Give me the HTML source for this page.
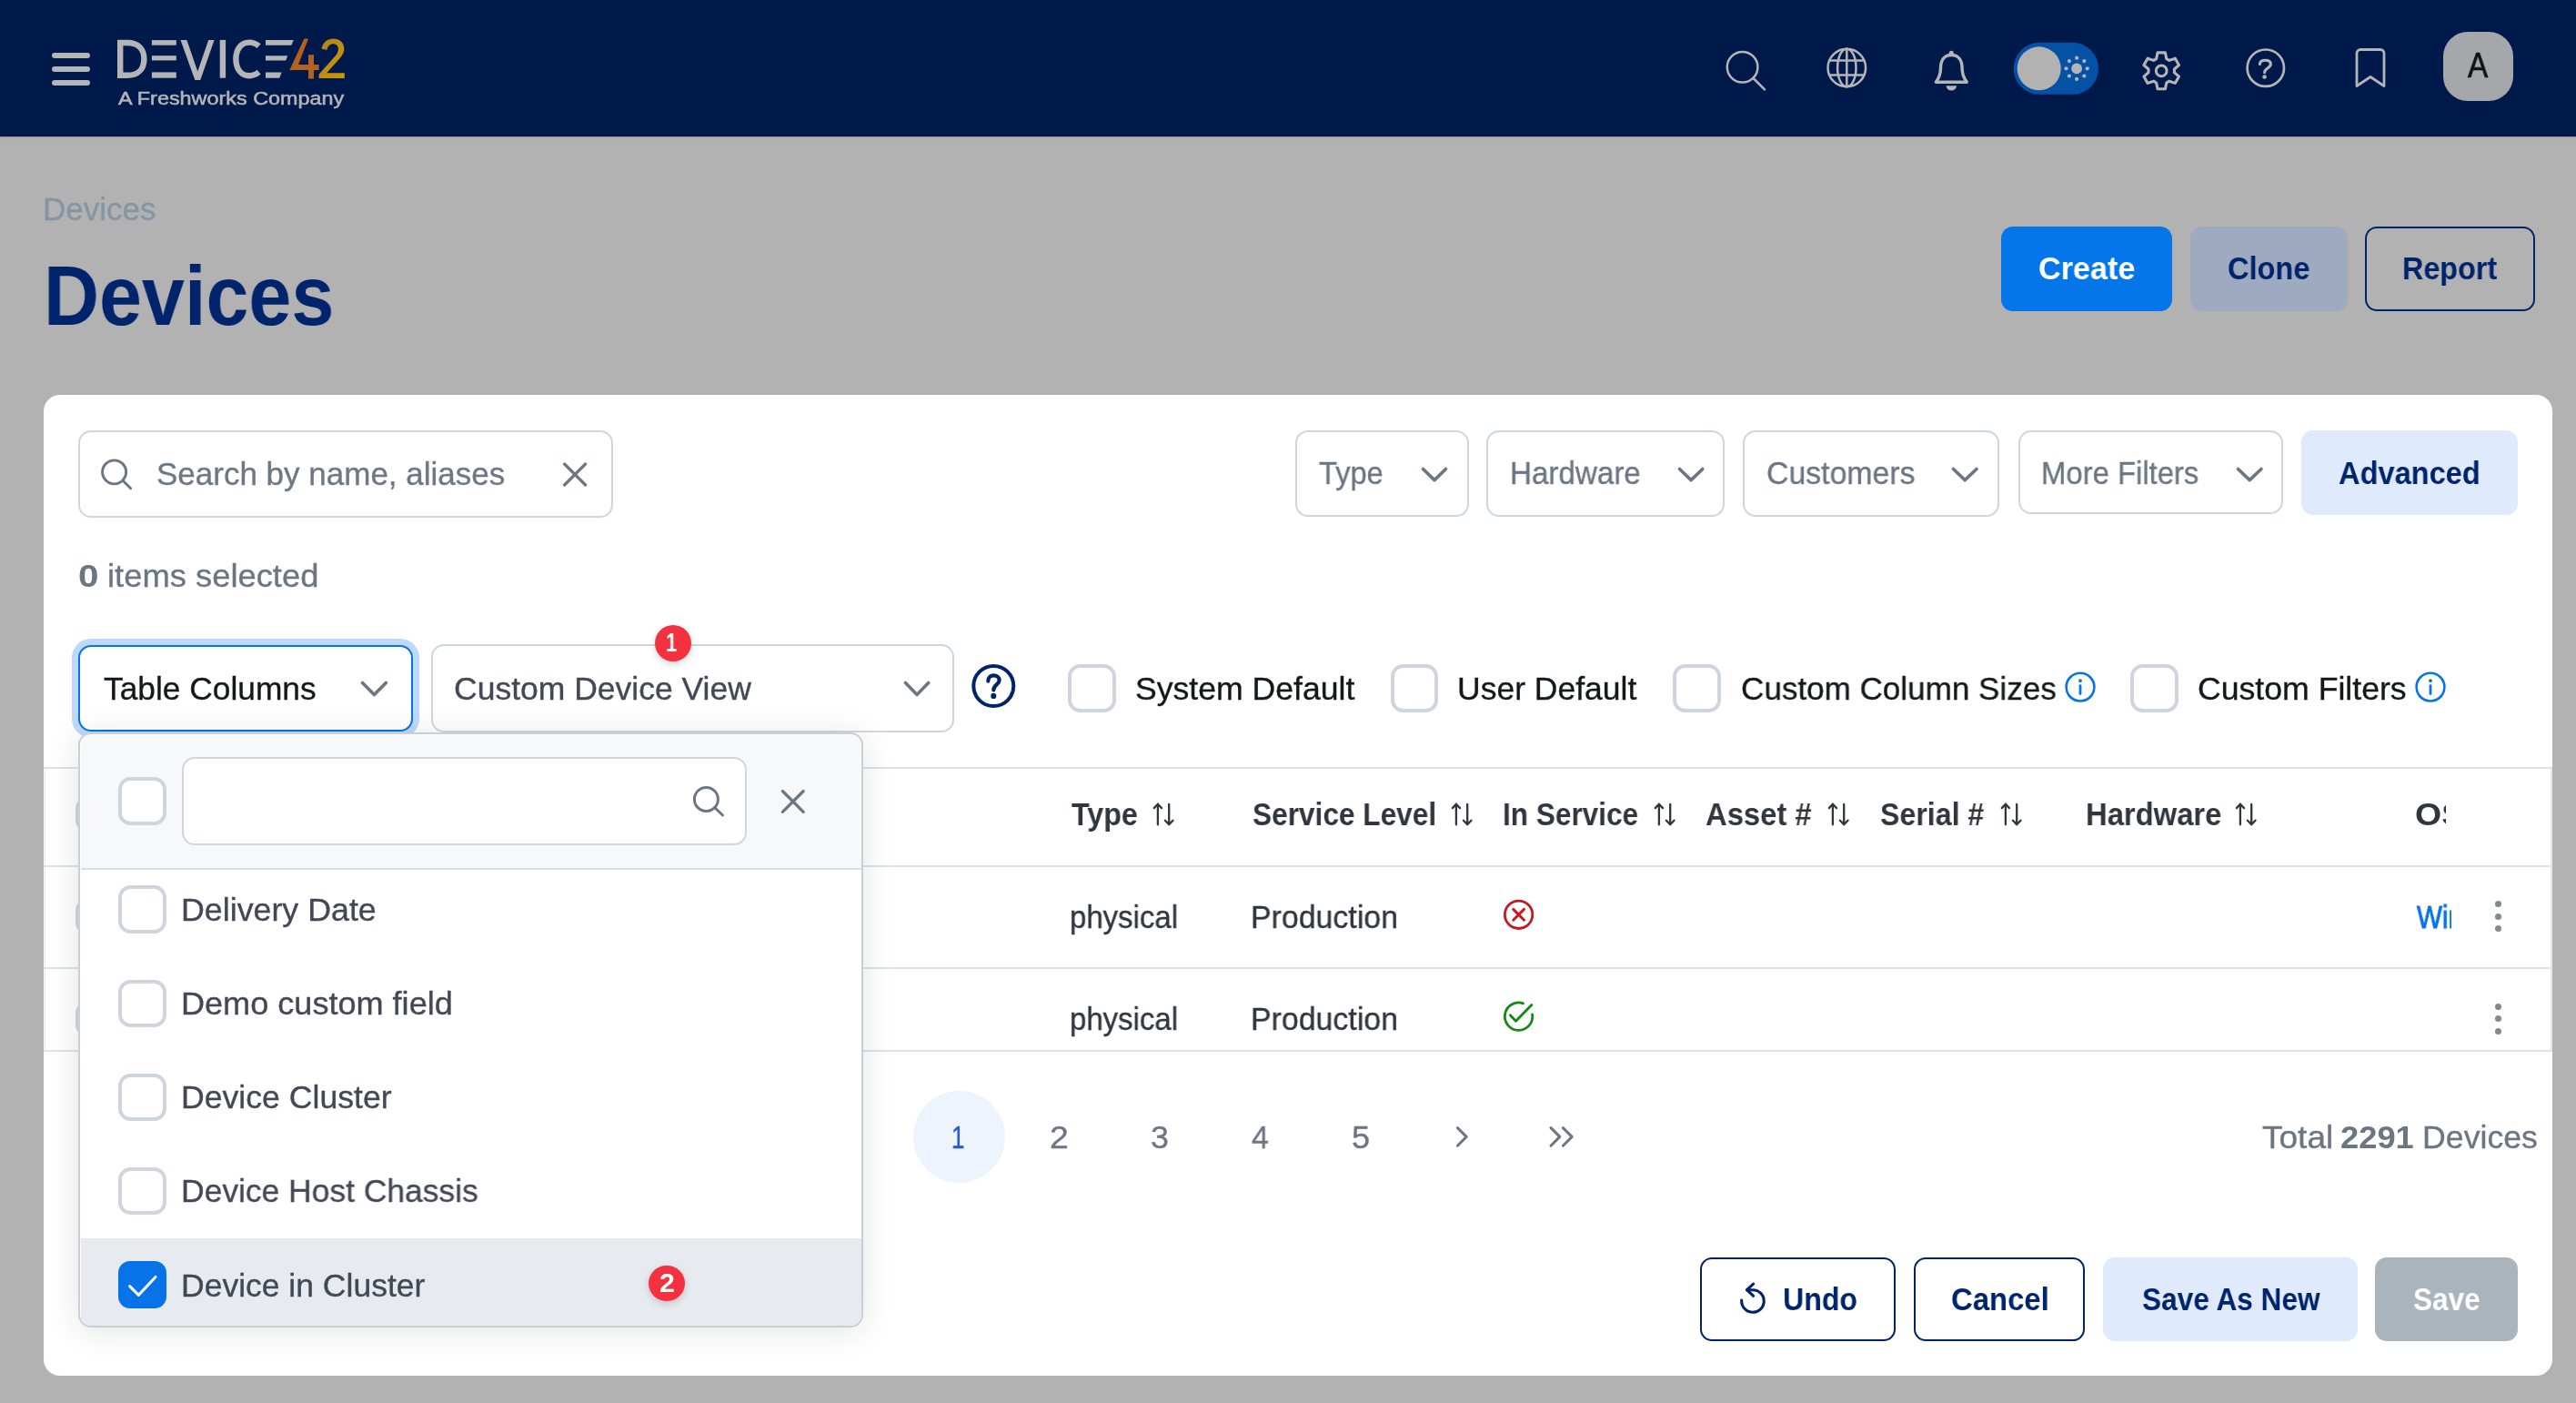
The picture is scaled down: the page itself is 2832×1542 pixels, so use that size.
<!DOCTYPE html>
<html lang="en"><head><meta charset="utf-8"><title>Devices - Device42</title>
<style>
html,body{margin:0;padding:0;}
body{width:2832px;height:1542px;overflow:hidden;background:#b2b2b2;font-family:"Liberation Sans",sans-serif;position:relative;}
.b{position:absolute;box-sizing:border-box;display:block;}
.t{position:absolute;white-space:pre;transform-origin:0 50%;display:block;will-change:transform;}

.hdr{background:#00194b;border-bottom:1px solid #001241;box-shadow:0 1px 2px rgba(0,0,30,.16);}
.card{background:#fff;border-radius:18px;}
.inp{background:#fff;border:2px solid #cfd6de;border-radius:14px;}
.cb{background:#fff;border:4px solid #cfd5dd;border-radius:13.5px;}
.btn{border-radius:13px;}
.ln{background:#dde2e8;}

</style></head><body>
<div class="b hdr" style="left:0px;top:0px;width:2832px;height:150px;"></div>
<div class="b " style="left:57px;top:58px;width:42px;height:6px;background:#b4b5b7;border-radius:3px;"></div>
<div class="b " style="left:57px;top:73px;width:42px;height:6px;background:#b4b5b7;border-radius:3px;"></div>
<div class="b " style="left:57px;top:88px;width:42px;height:6px;background:#b4b5b7;border-radius:3px;"></div>
<svg class="b" style="left:125px;top:36px;" width="260" height="60" viewBox="0 0 260 60">
<g fill="none" stroke="#b4b5b7" stroke-width="6.4">
<path d="M7.2 11 V46.8 H15 C27 46.8 33.4 39.5 33.4 28.9 C33.4 18.3 27 11 15 11 Z"/>
<path d="M119.9 7.9 V49.7"/>
<path d="M159.6 14.6 C156.5 11.9 152.8 10.6 149 10.6 C140 10.6 134.4 18 134.4 28.9 C134.4 39.8 140 47.2 149 47.2 C152.8 47.2 156.5 45.9 159.6 43.2"/>
</g>
<g fill="#b4b5b7">
<path d="M73.5 7.9 H80.4 L92.3 42.4 L104.2 7.9 H110.6 L95.3 51.9 H89.3 Z"/>
<rect x="41.9" y="8.1" width="26.9" height="5.6"/><rect x="41.9" y="25.2" width="26.9" height="5.2"/><rect x="41.9" y="43.4" width="26.9" height="6.3"/>
<path d="M167 8.1 H197.8 L195.3 13.7 H167 Z"/><path d="M167 25.2 H191.3 L189.2 30.4 H167 Z"/><path d="M167 43.4 H184.7 L182.2 49.7 H167 Z"/>
</g>
<path d="M209.4 6.6 L214 6.6 L203 35 L225.6 35 L225.6 40.9 L193.3 40.9 Z" fill="#b4601f"/>
<rect x="214" y="24.2" width="6" height="26.3" fill="#b4601f"/>
<defs><linearGradient id="g2" x1="0" y1="0" x2="1" y2="1"><stop offset="0" stop-color="#b6801a"/><stop offset="1" stop-color="#c9990a"/></linearGradient></defs>
<path d="M228.5 17.5 C230 10.5 235 6.6 241.5 6.6 C248.6 6.6 253.3 11.2 253.3 17.6 C253.3 22.2 251 25.6 246.5 30.5 L234 44.2 H253.8 V50 H225.6 V45.8 L241.8 27.6 C245.4 23.6 246.9 21 246.9 17.9 C246.9 14.6 244.8 12.3 241.3 12.3 C237.7 12.3 235.4 14.6 234.4 18.9 Z" fill="url(#g2)"/>
</svg>
<span class="t " style="left:130.00px;top:95.50px;font-size:20.5px;line-height:23px;color:#b4b5b7;transform:scaleX(1.1410);-webkit-text-stroke:0.35px #b4b5b7;-webkit-text-stroke:0.55px #b4b5b7;">A Freshworks Company</span>
<svg class="b" style="left:0px;top:0px;" width="2832" height="150" viewBox="0 0 2832 150"><g fill="none" stroke="#b4b5b7" stroke-width="2.5" stroke-linecap="round" stroke-linejoin="round"><circle cx="1915.6" cy="73.7" r="16.8"/><path d="M1927.6 86 L1940 98.3"/><circle cx="2030.3" cy="74.5" r="20.8"/><ellipse cx="2030.3" cy="74.5" rx="10.2" ry="20.8"/><path d="M2030.3 53.7V95.3M2011.5 66.4H2049.1M2011.5 82.6H2049.1"/></g><g fill="none" stroke="#b4b5b7" stroke-width="3.4" stroke-linejoin="round" stroke-linecap="round"><path d="M2145.3 60.5 C2136.5 60.5 2133.5 67.5 2133.5 75 C2133.5 82 2131.5 86 2128.3 90.2 H2162.3 C2159.1 86 2157.1 82 2157.1 75 C2157.1 67.5 2154.1 60.5 2145.3 60.5 Z"/></g><circle cx="2145.3" cy="58.4" r="2.6" fill="#b4b5b7"/><path d="M2139.6 94.3 H2151 A5.7 5.2 0 0 1 2139.6 94.3 Z" fill="#b4b5b7"/><rect x="2213.7" y="46.8" width="93.3" height="57" rx="28.5" fill="#0451a5"/><circle cx="2241.7" cy="75.3" r="24" fill="#b2b2b2"/><circle cx="2283.1" cy="75.3" r="5.9" fill="#b4b5b7"/><circle cx="2294.7" cy="75.3" r="2.1" fill="#b4b5b7"/><circle cx="2291.3" cy="83.5" r="2.1" fill="#b4b5b7"/><circle cx="2283.1" cy="86.9" r="2.1" fill="#b4b5b7"/><circle cx="2274.9" cy="83.5" r="2.1" fill="#b4b5b7"/><circle cx="2271.5" cy="75.3" r="2.1" fill="#b4b5b7"/><circle cx="2274.9" cy="67.1" r="2.1" fill="#b4b5b7"/><circle cx="2283.1" cy="63.7" r="2.1" fill="#b4b5b7"/><circle cx="2291.3" cy="67.1" r="2.1" fill="#b4b5b7"/><path d="M2370.6 64.6 L2372.0 57.9 L2380.4 57.9 L2381.8 64.6 L2384.8 66.4 L2391.3 64.2 L2395.5 71.5 L2390.4 76.0 L2390.4 79.6 L2395.5 84.1 L2391.3 91.4 L2384.8 89.2 L2381.8 91.0 L2380.4 97.7 L2372.0 97.7 L2370.6 91.0 L2367.6 89.2 L2361.1 91.4 L2356.9 84.1 L2362.0 79.6 L2362.0 76.0 L2356.9 71.5 L2361.1 64.2 L2367.6 66.4 Z" fill="none" stroke="#b4b5b7" stroke-width="3.1" stroke-linejoin="round"/><circle cx="2376.2" cy="77.8" r="5.9" fill="none" stroke="#b4b5b7" stroke-width="3"/><circle cx="2490.8" cy="74.7" r="20.2" fill="none" stroke="#b4b5b7" stroke-width="2.7"/><path d="M2484.4 70.6 C2484.4 67.6 2486.8 66.2 2490.4 66.2 C2494 66.2 2496.4 67.9 2496.4 70.6 C2496.4 75 2489.6 74.6 2489.6 79.8" fill="none" stroke="#b4b5b7" stroke-width="3" stroke-linecap="round"/><circle cx="2489.6" cy="84.5" r="2.3" fill="#b4b5b7"/><path d="M2591 94.5 V58.5 A4 4 0 0 1 2595 54.5 H2617 A4 4 0 0 1 2621 58.5 V94.5 L2606 84.5 Z" fill="none" stroke="#b4b5b7" stroke-width="2.8" stroke-linejoin="round"/></svg>
<div class="b " style="left:2686px;top:35px;width:77px;height:76px;background:#a6a7ab;border-radius:27px;"></div>
<span class="t " style="left:2713.20px;top:51.00px;font-size:38px;line-height:42px;color:#111;transform:scaleX(0.8746);-webkit-text-stroke:0.35px #111;-webkit-text-stroke:0.7px #111;">A</span>
<span class="t " style="left:46.60px;top:210.80px;font-size:34.8px;line-height:38px;color:#8595a4;transform:scaleX(1.0066);-webkit-text-stroke:0.35px #8595a4;">Devices</span>
<span class="t " style="left:47.51px;top:272.90px;font-size:92.4px;line-height:104px;color:#00246b;font-weight:700;transform:scaleX(0.9140);">Devices</span>
<div class="b btn" style="left:2200px;top:249px;width:188px;height:93px;background:#0576ea;"></div>
<span class="t " style="left:2240.73px;top:275.50px;font-size:34.5px;line-height:38px;color:#fff;font-weight:700;transform:scaleX(0.9907);">Create</span>
<div class="b btn" style="left:2407.5px;top:249px;width:173.0px;height:93px;background:#9eaabf;"></div>
<span class="t " style="left:2449.00px;top:275.50px;font-size:34.5px;line-height:38px;color:#00246b;font-weight:700;transform:scaleX(0.9430);">Clone</span>
<div class="b btn" style="left:2600px;top:249px;width:187px;height:93px;border:2.4px solid #00246b;"></div>
<span class="t " style="left:2641.30px;top:275.50px;font-size:34.5px;line-height:38px;color:#00246b;font-weight:700;transform:scaleX(0.9367);">Report</span>
<div class="b card" style="left:48px;top:434px;width:2758px;height:1078px;"></div>
<div class="b inp" style="left:86px;top:473px;width:588px;height:96px;"></div>
<svg class="b" style="left:100px;top:495px;" width="60" height="50" viewBox="0 0 60 50"><g fill="none" stroke="#6b7682" stroke-width="2.95" stroke-linecap="round"><circle cx="25.6" cy="23.85" r="13"/><path d="M35.1 33.2 L43.6 41.7"/></g></svg>
<span class="t " style="left:171.72px;top:501.00px;font-size:35px;line-height:39px;color:#6d7884;-webkit-text-stroke:0.35px #6d7884;">Search by name, aliases</span>
<svg class="b" style="left:612px;top:501px;" width="40" height="40" viewBox="0 0 40 40"><path d="M8.6 9 L31.6 32 M31.6 9 L8.6 32" stroke="#6b7682" stroke-width="3.2" stroke-linecap="round"/></svg>
<div class="b inp" style="left:1423.5px;top:473.4px;width:191.0999999999999px;height:94.60000000000002px;"></div>
<span class="t " style="left:1450.25px;top:501.20px;font-size:34.5px;line-height:38px;color:#6b7682;transform:scaleX(0.9460);-webkit-text-stroke:0.35px #6b7682;">Type</span>
<svg class="b" style="left:1559px;top:509.70000000000005px;" width="36" height="23.09999999999991" viewBox="0 0 36 23.09999999999991"><path d="M5.5 5.5 L18.0 17.6 L30.5 5.5" fill="none" stroke="#6b7682" stroke-width="3.6" stroke-linecap="round" stroke-linejoin="round"/></svg>
<div class="b inp" style="left:1634.2px;top:473.4px;width:262.20000000000005px;height:94.60000000000002px;"></div>
<span class="t " style="left:1659.55px;top:501.20px;font-size:34.5px;line-height:38px;color:#6b7682;transform:scaleX(0.9614);-webkit-text-stroke:0.35px #6b7682;">Hardware</span>
<svg class="b" style="left:1840.7px;top:509.70000000000005px;" width="36.299999999999955" height="23.09999999999991" viewBox="0 0 36.299999999999955 23.09999999999991"><path d="M5.5 5.5 L18.1 17.6 L30.8 5.5" fill="none" stroke="#6b7682" stroke-width="3.6" stroke-linecap="round" stroke-linejoin="round"/></svg>
<div class="b inp" style="left:1916px;top:473.4px;width:282.4000000000001px;height:94.60000000000002px;"></div>
<span class="t " style="left:1941.91px;top:501.20px;font-size:34.5px;line-height:38px;color:#6b7682;transform:scaleX(0.9806);-webkit-text-stroke:0.35px #6b7682;">Customers</span>
<svg class="b" style="left:2142.4px;top:509.70000000000005px;" width="36.5" height="23.09999999999991" viewBox="0 0 36.5 23.09999999999991"><path d="M5.5 5.5 L18.2 17.6 L31.0 5.5" fill="none" stroke="#6b7682" stroke-width="3.6" stroke-linecap="round" stroke-linejoin="round"/></svg>
<div class="b inp" style="left:2218.5px;top:473.4px;width:291.8000000000002px;height:91.89999999999998px;"></div>
<span class="t " style="left:2243.57px;top:501.20px;font-size:34.5px;line-height:38px;color:#6b7682;transform:scaleX(0.9518);-webkit-text-stroke:0.35px #6b7682;">More Filters</span>
<svg class="b" style="left:2454.6px;top:509.70000000000005px;" width="36.5" height="23.09999999999991" viewBox="0 0 36.5 23.09999999999991"><path d="M5.5 5.5 L18.2 17.6 L31.0 5.5" fill="none" stroke="#6b7682" stroke-width="3.6" stroke-linecap="round" stroke-linejoin="round"/></svg>
<div class="b btn" style="left:2530px;top:473.3px;width:238px;height:92.40000000000003px;background:#dfeafd;"></div>
<span class="t " style="left:2571.48px;top:500.90px;font-size:34.5px;line-height:38px;color:#00246b;font-weight:700;transform:scaleX(0.9450);">Advanced</span>
<span class="t " style="left:86.49px;top:613.20px;font-size:35px;line-height:39px;color:#6b7682;font-weight:700;transform:scaleX(1.1546);">0</span>
<span class="t " style="left:117.94px;top:613.20px;font-size:35px;line-height:39px;color:#6b7682;transform:scaleX(1.0389);-webkit-text-stroke:0.35px #6b7682;">items selected</span>
<div class="b " style="left:79px;top:702px;width:382.2px;height:109px;background:#bdd9fc;border-radius:21px;"></div>
<div class="b " style="left:86px;top:709px;width:368px;height:95px;background:#fff;border:2.4px solid #0674e8;border-radius:14px;"></div>
<span class="t " style="left:114.09px;top:737.00px;font-size:35px;line-height:39px;color:#15181b;transform:scaleX(1.0091);-webkit-text-stroke:0.35px #15181b;">Table Columns</span>
<svg class="b" style="left:393.4px;top:745px;" width="36.80000000000001" height="24" viewBox="0 0 36.80000000000001 24"><path d="M5.5 5.5 L18.4 18.5 L31.3 5.5" fill="none" stroke="#6b7682" stroke-width="3.6" stroke-linecap="round" stroke-linejoin="round"/></svg>
<div class="b inp" style="left:473.6px;top:707.8px;width:575.8000000000001px;height:97.0px;"></div>
<span class="t " style="left:499.22px;top:737.00px;font-size:35px;line-height:39px;color:#424954;transform:scaleX(1.0143);-webkit-text-stroke:0.35px #424954;">Custom Device View</span>
<svg class="b" style="left:989.6px;top:745px;" width="36.19999999999993" height="24" viewBox="0 0 36.19999999999993 24"><path d="M5.5 5.5 L18.1 18.5 L30.7 5.5" fill="none" stroke="#6b7682" stroke-width="3.6" stroke-linecap="round" stroke-linejoin="round"/></svg>
<div class="b " style="left:719.5px;top:686.9px;width:40.0px;height:40.0px;background:#f4323f;border-radius:50%;box-shadow:0 3px 8px rgba(0,0,0,.16);"></div>
<span class="t " style="left:732.27px;top:690.10px;font-size:29px;line-height:32px;color:#fff;font-weight:700;transform:scaleX(0.7630);">1</span>
<svg class="b" style="left:1064px;top:726px;" width="56" height="56" viewBox="0 0 56 56"><circle cx="28.3" cy="28" r="22" fill="none" stroke="#00246b" stroke-width="4"/><path d="M22.3 22.6 C22.3 18.6 24.9 16.4 28.4 16.4 C32 16.4 34.6 18.6 34.6 21.8 C34.6 26.4 28.3 26.6 28.3 32.4" fill="none" stroke="#00246b" stroke-width="4.2" stroke-linecap="round"/><circle cx="28.3" cy="38.9" r="3.1" fill="#00246b"/></svg>
<div class="b cb" style="left:1174.3px;top:730px;width:52.59999999999991px;height:53.200000000000045px;"></div>
<span class="t " style="left:1248.10px;top:737.10px;font-size:35.5px;line-height:40px;color:#15181b;transform:scaleX(1.0030);-webkit-text-stroke:0.35px #15181b;">System Default</span>
<div class="b cb" style="left:1528.8px;top:730px;width:52.59999999999991px;height:53.200000000000045px;"></div>
<span class="t " style="left:1602.13px;top:737.10px;font-size:35.5px;line-height:40px;color:#15181b;-webkit-text-stroke:0.35px #15181b;">User Default</span>
<div class="b cb" style="left:1839px;top:730px;width:52.59999999999991px;height:53.200000000000045px;"></div>
<span class="t " style="left:1913.85px;top:737.10px;font-size:35.5px;line-height:40px;color:#15181b;transform:scaleX(0.9874);-webkit-text-stroke:0.35px #15181b;">Custom Column Sizes</span>
<div class="b cb" style="left:2342.3px;top:730px;width:52.59999999999991px;height:53.200000000000045px;"></div>
<span class="t " style="left:2416.02px;top:737.10px;font-size:35.5px;line-height:40px;color:#15181b;transform:scaleX(1.0036);-webkit-text-stroke:0.35px #15181b;">Custom Filters</span>
<svg class="b" style="left:2266.6px;top:735px;" width="40" height="40" viewBox="0 0 40 40"><circle cx="20" cy="20.1" r="15.4" fill="none" stroke="#0674e8" stroke-width="2.6"/><path d="M20 18.6 V27.6" stroke="#0674e8" stroke-width="2.8" stroke-linecap="round"/><circle cx="20" cy="13.2" r="1.9" fill="#0674e8"/></svg>
<svg class="b" style="left:2652px;top:735px;" width="40" height="40" viewBox="0 0 40 40"><circle cx="20" cy="20.1" r="15.4" fill="none" stroke="#0674e8" stroke-width="2.6"/><path d="M20 18.6 V27.6" stroke="#0674e8" stroke-width="2.8" stroke-linecap="round"/><circle cx="20" cy="13.2" r="1.9" fill="#0674e8"/></svg>
<div class="b ln" style="left:48px;top:843px;width:2758px;height:2.2000000000000455px;"></div>
<div class="b ln" style="left:48px;top:951px;width:2758px;height:2.2000000000000455px;"></div>
<div class="b ln" style="left:48px;top:1063px;width:2758px;height:2.2000000000000455px;"></div>
<div class="b ln" style="left:48px;top:1154px;width:2758px;height:2.2000000000000455px;"></div>
<div class="b " style="left:48.6px;top:845px;width:1.7999999999999972px;height:309px;background:#e3e7ec;"></div>
<div class="b " style="left:2804px;top:845px;width:1.699999999999818px;height:309px;background:#e3e7ec;"></div>
<span class="t " style="left:1177.98px;top:875.90px;font-size:34.5px;line-height:38px;color:#2f363d;font-weight:700;transform:scaleX(0.9335);">Type</span>
<svg class="b" style="left:1265px;top:880px;" width="30" height="32" viewBox="0 0 30 32"><g fill="none" stroke="#2f363d" stroke-width="2.3" stroke-linecap="round" stroke-linejoin="round"><path d="M7.9 26.3 V3.7 M3.8 8.1 L7.9 3.7 L12 8.1"/><path d="M20.2 3.9 V26.3 M15.9 21.7 L20.2 26.3 L24.5 21.7"/></g></svg>
<span class="t " style="left:1376.81px;top:875.90px;font-size:34.5px;line-height:38px;color:#2f363d;font-weight:700;transform:scaleX(0.9165);">Service Level</span>
<svg class="b" style="left:1593.1px;top:880px;" width="30" height="32" viewBox="0 0 30 32"><g fill="none" stroke="#2f363d" stroke-width="2.3" stroke-linecap="round" stroke-linejoin="round"><path d="M7.9 26.3 V3.7 M3.8 8.1 L7.9 3.7 L12 8.1"/><path d="M20.2 3.9 V26.3 M15.9 21.7 L20.2 26.3 L24.5 21.7"/></g></svg>
<span class="t " style="left:1652.25px;top:875.90px;font-size:34.5px;line-height:38px;color:#2f363d;font-weight:700;transform:scaleX(0.9146);">In Service</span>
<svg class="b" style="left:1816.1px;top:880px;" width="30" height="32" viewBox="0 0 30 32"><g fill="none" stroke="#2f363d" stroke-width="2.3" stroke-linecap="round" stroke-linejoin="round"><path d="M7.9 26.3 V3.7 M3.8 8.1 L7.9 3.7 L12 8.1"/><path d="M20.2 3.9 V26.3 M15.9 21.7 L20.2 26.3 L24.5 21.7"/></g></svg>
<span class="t " style="left:1875.28px;top:875.90px;font-size:34.5px;line-height:38px;color:#2f363d;font-weight:700;transform:scaleX(0.9503);">Asset #</span>
<svg class="b" style="left:2006.5px;top:880px;" width="30" height="32" viewBox="0 0 30 32"><g fill="none" stroke="#2f363d" stroke-width="2.3" stroke-linecap="round" stroke-linejoin="round"><path d="M7.9 26.3 V3.7 M3.8 8.1 L7.9 3.7 L12 8.1"/><path d="M20.2 3.9 V26.3 M15.9 21.7 L20.2 26.3 L24.5 21.7"/></g></svg>
<span class="t " style="left:2066.80px;top:875.90px;font-size:34.5px;line-height:38px;color:#2f363d;font-weight:700;transform:scaleX(0.9305);">Serial #</span>
<svg class="b" style="left:2197.2px;top:880px;" width="30" height="32" viewBox="0 0 30 32"><g fill="none" stroke="#2f363d" stroke-width="2.3" stroke-linecap="round" stroke-linejoin="round"><path d="M7.9 26.3 V3.7 M3.8 8.1 L7.9 3.7 L12 8.1"/><path d="M20.2 3.9 V26.3 M15.9 21.7 L20.2 26.3 L24.5 21.7"/></g></svg>
<span class="t " style="left:2292.67px;top:875.90px;font-size:34.5px;line-height:38px;color:#2f363d;font-weight:700;transform:scaleX(0.9502);">Hardware</span>
<svg class="b" style="left:2455.3px;top:880px;" width="30" height="32" viewBox="0 0 30 32"><g fill="none" stroke="#2f363d" stroke-width="2.3" stroke-linecap="round" stroke-linejoin="round"><path d="M7.9 26.3 V3.7 M3.8 8.1 L7.9 3.7 L12 8.1"/><path d="M20.2 3.9 V26.3 M15.9 21.7 L20.2 26.3 L24.5 21.7"/></g></svg>
<div class="b " style="left:2650px;top:870px;width:38.80000000000018px;height:60px;overflow:hidden;"><span class="t " style="left:5.10px;top:5.90px;font-size:34.5px;line-height:38px;color:#2f363d;font-weight:700;transform:scaleX(1.0875);">OS</span></div>
<div class="b " style="left:2650px;top:985px;width:45.40000000000009px;height:60px;overflow:hidden;"><span class="t " style="left:6.60px;top:3.80px;font-size:34.5px;line-height:38px;color:#0674e8;transform:scaleX(0.8600);-webkit-text-stroke:0.9px #0674e8;">Win</span></div>
<span class="t " style="left:1176.42px;top:988.80px;font-size:34.5px;line-height:38px;color:#2f363d;transform:scaleX(0.9551);-webkit-text-stroke:0.35px #2f363d;">physical</span>
<span class="t " style="left:1375.39px;top:988.80px;font-size:34.5px;line-height:38px;color:#2f363d;transform:scaleX(0.9820);-webkit-text-stroke:0.35px #2f363d;">Production</span>
<span class="t " style="left:1176.42px;top:1100.70px;font-size:34.5px;line-height:38px;color:#2f363d;transform:scaleX(0.9551);-webkit-text-stroke:0.35px #2f363d;">physical</span>
<span class="t " style="left:1375.39px;top:1100.70px;font-size:34.5px;line-height:38px;color:#2f363d;transform:scaleX(0.9820);-webkit-text-stroke:0.35px #2f363d;">Production</span>
<svg class="b" style="left:1649px;top:985px;" width="42" height="42" viewBox="0 0 42 42"><circle cx="20.6" cy="20.3" r="15.2" fill="none" stroke="#c5191e" stroke-width="2.8"/><path d="M14.7 14.4 L26.5 26.2 M26.5 14.4 L14.7 26.2" stroke="#c5191e" stroke-width="2.9" stroke-linecap="round"/></svg>
<svg class="b" style="left:1649px;top:1097px;" width="42" height="42" viewBox="0 0 42 42"><path d="M35.6 17.95 A15.2 15.2 0 1 1 25.6 5.85" fill="none" stroke="#138a16" stroke-width="2.8" stroke-linecap="round"/><path d="M11.5 18.9 L17.5 25.3 L34.8 7.6" fill="none" stroke="#138a16" stroke-width="2.9" stroke-linecap="round" stroke-linejoin="round"/></svg>
<div class="b " style="left:2743.2px;top:990.1px;width:7.0px;height:7.0px;background:#84888e;border-radius:50%;"></div>
<div class="b " style="left:2743.2px;top:1003.5px;width:7.0px;height:7.0px;background:#84888e;border-radius:50%;"></div>
<div class="b " style="left:2743.2px;top:1016.9px;width:7.0px;height:7.0px;background:#84888e;border-radius:50%;"></div>
<div class="b " style="left:2743.2px;top:1102.8999999999999px;width:7.0px;height:7.0px;background:#84888e;border-radius:50%;"></div>
<div class="b " style="left:2743.2px;top:1116.3px;width:7.0px;height:7.0px;background:#84888e;border-radius:50%;"></div>
<div class="b " style="left:2743.2px;top:1129.7px;width:7.0px;height:7.0px;background:#84888e;border-radius:50%;"></div>
<div class="b " style="left:82.7px;top:875.5px;width:52.3px;height:38.5px;background:#fff;border:3.5px solid #cfd5dd;border-radius:13px;"></div>
<div class="b " style="left:82.7px;top:988px;width:52.3px;height:38.5px;background:#fff;border:3.5px solid #cfd5dd;border-radius:13px;"></div>
<div class="b " style="left:82.7px;top:1100.6px;width:52.3px;height:38.5px;background:#fff;border:3.5px solid #cfd5dd;border-radius:13px;"></div>
<div class="b " style="left:1003.8px;top:1198.7px;width:101.20000000000005px;height:101.20000000000005px;background:#edf4fd;border-radius:50%;"></div>
<span class="t " style="left:1045.83px;top:1229.90px;font-size:35px;line-height:39px;color:#2459d6;transform:scaleX(0.7488);-webkit-text-stroke:0.35px #2459d6;">1</span>
<span class="t " style="left:1154.23px;top:1229.90px;font-size:35px;line-height:39px;color:#6b7682;transform:scaleX(1.0683);-webkit-text-stroke:0.35px #6b7682;">2</span>
<span class="t " style="left:1265.05px;top:1229.90px;font-size:35px;line-height:39px;color:#6b7682;transform:scaleX(1.0238);-webkit-text-stroke:0.35px #6b7682;">3</span>
<span class="t " style="left:1376.23px;top:1229.90px;font-size:35px;line-height:39px;color:#6b7682;transform:scaleX(0.9636);-webkit-text-stroke:0.35px #6b7682;">4</span>
<span class="t " style="left:1485.55px;top:1229.90px;font-size:35px;line-height:39px;color:#6b7682;transform:scaleX(1.0346);-webkit-text-stroke:0.35px #6b7682;">5</span>
<svg class="b" style="left:1590px;top:1230px;" width="40" height="40" viewBox="0 0 40 40"><path d="M12.4 9.6 L22.2 19.4 L12.4 29.2" fill="none" stroke="#6b7682" stroke-width="3" stroke-linecap="round" stroke-linejoin="round"/></svg>
<svg class="b" style="left:1696px;top:1230px;" width="44" height="40" viewBox="0 0 44 40"><path d="M9 9.6 L18.8 19.4 L9 29.2 M22.4 9.6 L32.2 19.4 L22.4 29.2" fill="none" stroke="#6b7682" stroke-width="3" stroke-linecap="round" stroke-linejoin="round"/></svg>
<span class="t " style="left:2486.76px;top:1230.00px;font-size:35px;line-height:39px;color:#6b7682;transform:scaleX(1.0584);-webkit-text-stroke:0.35px #6b7682;">Total</span>
<span class="t " style="left:2572.91px;top:1230.00px;font-size:35px;line-height:39px;color:#6b7682;font-weight:700;transform:scaleX(1.0375);">2291</span>
<span class="t " style="left:2662.84px;top:1230.00px;font-size:35px;line-height:39px;color:#6b7682;transform:scaleX(1.0199);-webkit-text-stroke:0.35px #6b7682;">Devices</span>
<div class="b btn" style="left:1869px;top:1382px;width:214.69999999999982px;height:91.79999999999995px;border:2.4px solid #00246b;background:#fff;"></div>
<svg class="b" style="left:1903.4px;top:1404px;" width="46" height="46" viewBox="0 0 46 46"><path d="M11.7 25 A12.3 12.3 0 1 0 24 13.7 H17.6" fill="none" stroke="#00246b" stroke-width="3.1" stroke-linecap="round"/><path d="M24.6 7.1 L17.5 13.7 L24.6 20.3" fill="none" stroke="#00246b" stroke-width="3.1" stroke-linecap="round" stroke-linejoin="round"/></svg>
<span class="t " style="left:1960.47px;top:1408.70px;font-size:34.5px;line-height:38px;color:#00246b;font-weight:700;transform:scaleX(0.9308);">Undo</span>
<div class="b btn" style="left:2103.5px;top:1382px;width:188.9000000000001px;height:91.79999999999995px;border:2.4px solid #00246b;background:#fff;"></div>
<span class="t " style="left:2144.99px;top:1408.70px;font-size:34.5px;line-height:38px;color:#00246b;font-weight:700;transform:scaleX(0.9528);">Cancel</span>
<div class="b btn" style="left:2311.8px;top:1382px;width:280.1999999999998px;height:92px;background:#dfeafd;"></div>
<span class="t " style="left:2354.51px;top:1408.70px;font-size:34.5px;line-height:38px;color:#00246b;font-weight:700;transform:scaleX(0.9159);">Save As New</span>
<div class="b btn" style="left:2611.1px;top:1382px;width:156.9000000000001px;height:92px;background:#aab4bd;"></div>
<span class="t " style="left:2653.21px;top:1408.70px;font-size:34.5px;line-height:38px;color:#fff;font-weight:700;transform:scaleX(0.9128);">Save</span>
<div class="b " style="left:86px;top:805px;width:863px;height:654px;background:#fff;border:2px solid #c9cfd6;border-radius:14px;overflow:hidden;box-shadow:0 4px 34px rgba(20,30,40,.12);"><div class="b " style="left:0.5999999999999943px;top:0.6000000000000227px;width:858.4px;height:146.39999999999998px;background:#f7f8f9;"></div><div class="b " style="left:0.5999999999999943px;top:147px;width:858.4px;height:2.2000000000000455px;background:#d9dee4;"></div><div class="b cb" style="left:42.19999999999999px;top:166.29999999999995px;width:52.400000000000006px;height:52.40000000000009px;"></div><span class="t " style="left:110.74px;top:172.70px;font-size:35.5px;line-height:40px;color:#424954;transform:scaleX(1.0080);-webkit-text-stroke:0.35px #424954;">Delivery Date</span><div class="b cb" style="left:42.19999999999999px;top:269.5px;width:52.400000000000006px;height:52.40000000000009px;"></div><span class="t " style="left:110.71px;top:275.90px;font-size:35.5px;line-height:40px;color:#424954;transform:scaleX(1.0164);-webkit-text-stroke:0.35px #424954;">Demo custom field</span><div class="b cb" style="left:42.19999999999999px;top:372.70000000000005px;width:52.400000000000006px;height:52.40000000000009px;"></div><span class="t " style="left:110.75px;top:379.10px;font-size:35.5px;line-height:40px;color:#424954;transform:scaleX(1.0037);-webkit-text-stroke:0.35px #424954;">Device Cluster</span><div class="b cb" style="left:42.19999999999999px;top:475.89999999999986px;width:52.400000000000006px;height:52.40000000000009px;"></div><span class="t " style="left:110.77px;top:482.30px;font-size:35.5px;line-height:40px;color:#424954;transform:scaleX(0.9978);-webkit-text-stroke:0.35px #424954;">Device Host Chassis</span><div class="b " style="left:0.5999999999999943px;top:553.7px;width:858.4px;height:103.19999999999982px;background:#e7eaee;"></div><div class="b " style="left:42.19999999999999px;top:579.0999999999999px;width:52.400000000000006px;height:52.40000000000009px;background:#0674e8;border-radius:13px;"></div><svg class="b" style="left:42.19999999999999px;top:579.0999999999999px;" width="52.4" height="52.4" viewBox="0 0 52.4 52.4"><path d="M12.6 27.6 L22.4 37.4 L41 17.4" fill="none" stroke="#fff" stroke-width="3" stroke-linecap="round" stroke-linejoin="round"/></svg><span class="t " style="left:110.75px;top:585.50px;font-size:35.5px;line-height:40px;color:#424954;-webkit-text-stroke:0.35px #424954;">Device in Cluster</span><div class="b " style="left:0.5999999999999943px;top:133px;width:858.4px;height:14px;background:#f7f8f9;"></div><div class="b cb" style="left:42.19999999999999px;top:47.299999999999955px;width:52.400000000000006px;height:52.40000000000009px;"></div><div class="b inp" style="left:112.30000000000001px;top:25.100000000000023px;width:620.7px;height:96.89999999999998px;"></div><svg class="b" style="left:667px;top:51px;" width="46" height="46" viewBox="0 0 46 46"><g fill="none" stroke="#6b7682" stroke-width="2.95" stroke-linecap="round"><circle cx="21.4" cy="20.4" r="13"/><path d="M30.9 29.8 L39.5 38"/></g></svg><svg class="b" style="left:764px;top:54px;" width="40" height="40" viewBox="0 0 40 40"><path d="M8.4 8.5 L31.2 31.3 M31.2 8.5 L8.4 31.3" stroke="#6b7682" stroke-width="3.2" stroke-linecap="round"/></svg><div class="b " style="left:625.1px;top:583.5px;width:39.799999999999955px;height:39.799999999999955px;background:#f4323f;border-radius:50%;box-shadow:0 3px 8px rgba(0,0,0,.16);"></div><span class="t " style="left:637.09px;top:586.90px;font-size:29px;line-height:32px;color:#fff;font-weight:700;transform:scaleX(1.0486);">2</span></div>
</body></html>
